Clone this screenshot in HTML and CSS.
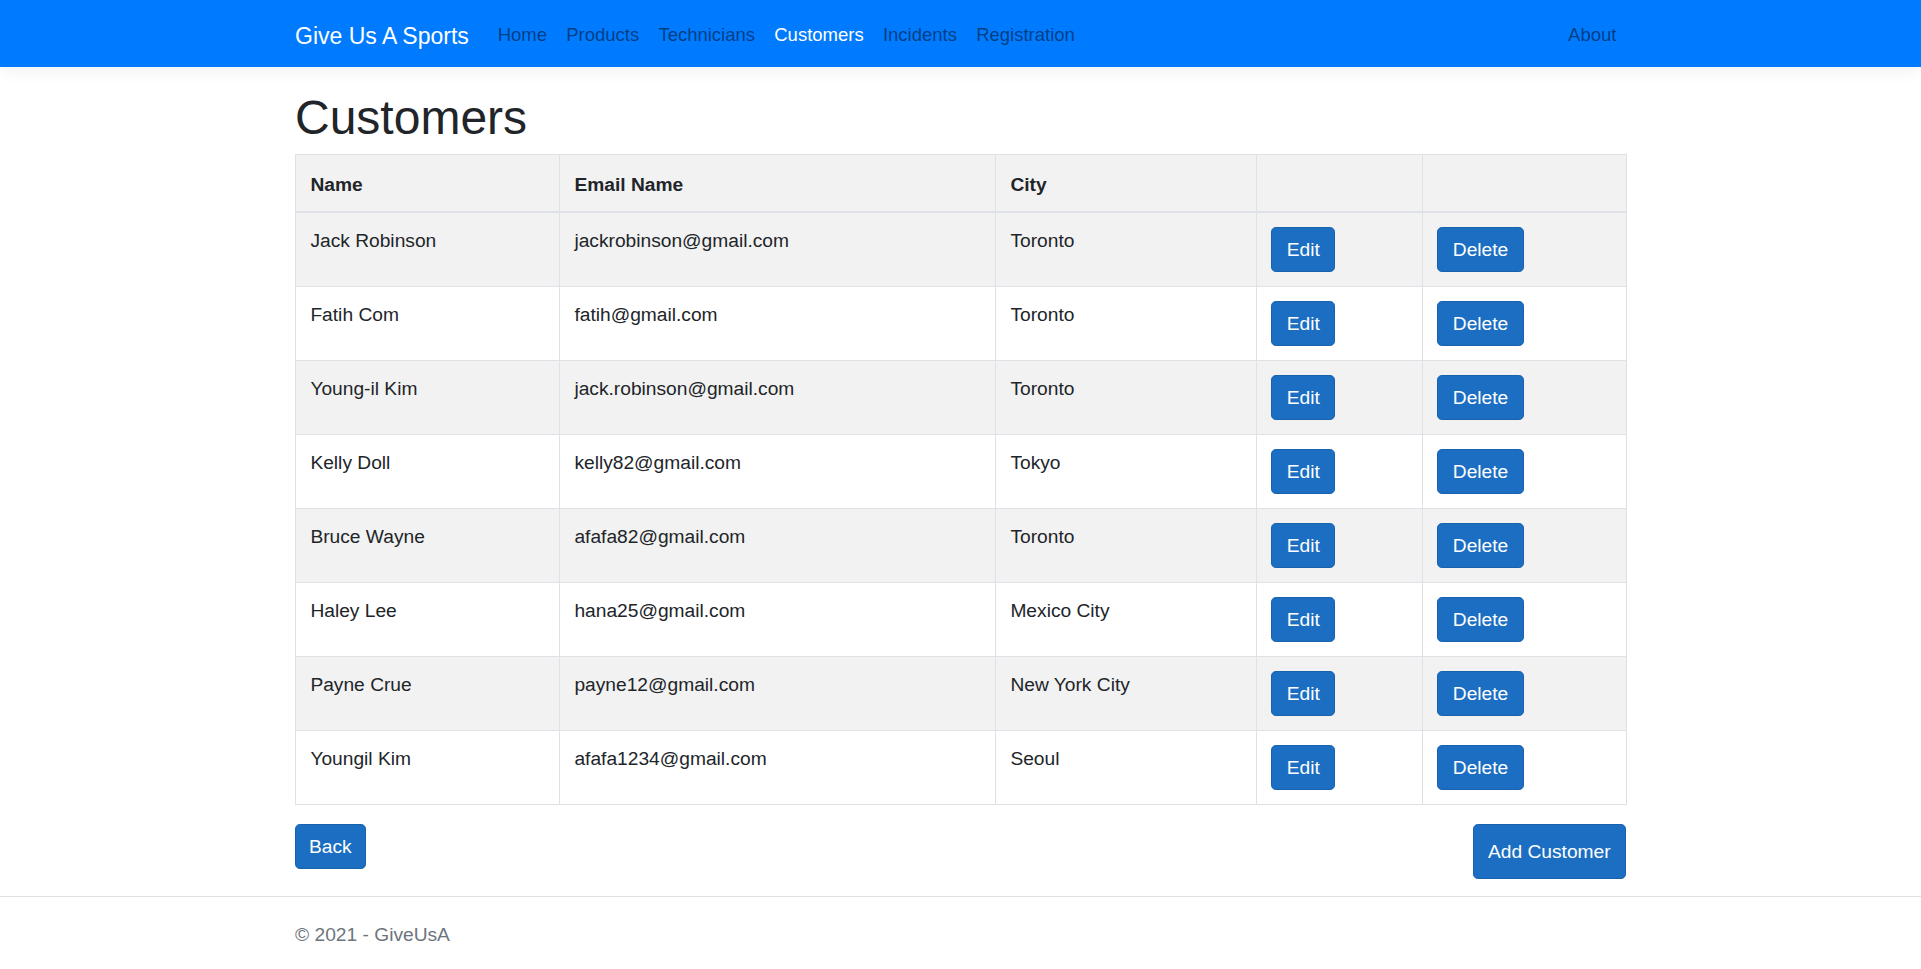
FILE: index.html
```html
<!DOCTYPE html>
<html lang="en">
<head>
<meta charset="utf-8">
<title>Customers - GiveUsA</title>
<link rel="stylesheet" href="styles.css">
</head>
<body>
<header class="site-header">
  <nav class="navbar">
    <div class="container nav-inner">
      <a class="brand" href="#">Give Us A Sports</a>
      <ul class="nav-list">
        <li><a class="nav-link" href="#">Home</a></li>
        <li><a class="nav-link" href="#">Products</a></li>
        <li><a class="nav-link" href="#">Technicians</a></li>
        <li><a class="nav-link active" href="#">Customers</a></li>
        <li><a class="nav-link" href="#">Incidents</a></li>
        <li><a class="nav-link" href="#">Registration</a></li>
      </ul>
      <ul class="nav-list nav-right">
        <li><a class="nav-link" href="#">About</a></li>
      </ul>
    </div>
  </nav>
</header>

<main class="container main">
  <h1 class="page-title">Customers</h1>
  <table class="data-table">
    <colgroup>
      <col class="col-name">
      <col class="col-email">
      <col class="col-city">
      <col class="col-edit">
      <col class="col-delete">
    </colgroup>
    <thead>
      <tr>
        <th>Name</th>
        <th>Email Name</th>
        <th>City</th>
        <th></th>
        <th></th>
      </tr>
    </thead>
    <tbody>
      <tr>
        <td>Jack Robinson</td>
        <td>jackrobinson@gmail.com</td>
        <td>Toronto</td>
        <td><a class="btn" href="#">Edit</a></td>
        <td><a class="btn" href="#">Delete</a></td>
      </tr>
      <tr>
        <td>Fatih Com</td>
        <td>fatih@gmail.com</td>
        <td>Toronto</td>
        <td><a class="btn" href="#">Edit</a></td>
        <td><a class="btn" href="#">Delete</a></td>
      </tr>
      <tr>
        <td>Young-il Kim</td>
        <td>jack.robinson@gmail.com</td>
        <td>Toronto</td>
        <td><a class="btn" href="#">Edit</a></td>
        <td><a class="btn" href="#">Delete</a></td>
      </tr>
      <tr>
        <td>Kelly Doll</td>
        <td>kelly82@gmail.com</td>
        <td>Tokyo</td>
        <td><a class="btn" href="#">Edit</a></td>
        <td><a class="btn" href="#">Delete</a></td>
      </tr>
      <tr>
        <td>Bruce Wayne</td>
        <td>afafa82@gmail.com</td>
        <td>Toronto</td>
        <td><a class="btn" href="#">Edit</a></td>
        <td><a class="btn" href="#">Delete</a></td>
      </tr>
      <tr>
        <td>Haley Lee</td>
        <td>hana25@gmail.com</td>
        <td>Mexico City</td>
        <td><a class="btn" href="#">Edit</a></td>
        <td><a class="btn" href="#">Delete</a></td>
      </tr>
      <tr>
        <td>Payne Crue</td>
        <td>payne12@gmail.com</td>
        <td>New York City</td>
        <td><a class="btn" href="#">Edit</a></td>
        <td><a class="btn" href="#">Delete</a></td>
      </tr>
      <tr>
        <td>Youngil Kim</td>
        <td>afafa1234@gmail.com</td>
        <td>Seoul</td>
        <td><a class="btn" href="#">Edit</a></td>
        <td><a class="btn" href="#">Delete</a></td>
      </tr>
    </tbody>
  </table>
  <div class="actions">
    <a class="btn btn-back" href="#">Back</a>
    <a class="btn btn-add" href="#">Add Customer</a>
  </div>
</main>

<footer class="footer">
  <div class="container">&copy; 2021 - GiveUsA</div>
</footer>
</body>
</html>
```

FILE: styles.css
```css
* {
  box-sizing: border-box;
}

html {
  height: 100%;
}

body {
  margin: 0;
  min-height: 100vh;
  display: flex;
  flex-direction: column;
  font-family: "Liberation Sans", Arial, sans-serif;
  font-size: 19.2px;
  line-height: 1.5;
  color: #212529;
  background: #ffffff;
}

a {
  text-decoration: none;
}

.container {
  width: 1331px;
  margin: 0 auto;
}

/* Navbar */
.site-header {
  position: relative;
  z-index: 2;
}

.navbar {
  background: #007bff;
  padding: 9.6px 0;
  box-shadow: 0 4.8px 14.4px rgba(0, 0, 0, 0.05);
  margin-bottom: 19.2px;
}

.nav-inner {
  display: flex;
  align-items: center;
}

.brand {
  color: #ffffff;
  font-size: 23px;
  line-height: 36px;
  padding: 8px 0 4px;
  margin-right: 19.2px;
  white-space: nowrap;
}

.nav-list {
  display: flex;
  list-style: none;
  margin: 0;
  padding: 0;
}

.nav-right {
  margin-left: auto;
}

.nav-link {
  display: block;
  padding: 10.8px 9.6px 6.4px;
  font-size: 18.5px;
  line-height: 30.8px;
  color: rgba(0, 0, 0, 0.5);
}

.nav-link.active {
  color: #ffffff;
}

/* Main */
.main {
  flex: 1 0 auto;
}

.page-title {
  margin: 0 0 6.6px;
  padding-top: 3px;
  font-size: 48px;
  font-weight: 400;
  line-height: 57.6px;
}

.data-table {
  width: 100%;
  border-collapse: collapse;
  table-layout: fixed;
  margin-bottom: 19.2px;
}

.col-name { width: 264px; }
.col-email { width: 436px; }
.col-city { width: 261px; }
.col-edit { width: 166px; }
.col-delete { width: 204px; }

.data-table th,
.data-table td {
  border: 1px solid #dee2e6;
  padding: 14px 14.4px 13.8px;
  text-align: left;
  vertical-align: top;
  line-height: 28.8px;
}

.data-table th {
  font-weight: 700;
  border-bottom-width: 2px;
  padding-top: 16px;
  padding-bottom: 11.8px;
}

.data-table thead tr {
  background: #f2f2f2;
}

.data-table tbody tr:nth-child(odd) {
  background: #f2f2f2;
}

.btn {
  display: inline-block;
  vertical-align: middle;
  color: #ffffff;
  background: #1b6ec2;
  border: 1px solid #1861ac;
  border-radius: 4.8px;
  padding: 8.2px 14.4px 6.2px;
  font-size: 19.2px;
  line-height: 28.8px;
  white-space: nowrap;
}

.actions {
  display: flex;
  justify-content: space-between;
  align-items: flex-start;
}

.btn-back {
  padding-left: 13px;
  padding-right: 13px;
}

.btn-add {
  padding: 12.5px 14.4px 11.5px;
}

/* Footer */
.footer {
  border-top: 1px solid #dee2e6;
  color: #6c757d;
  line-height: 69px;
  padding-top: 3px;
  white-space: nowrap;
}
```
